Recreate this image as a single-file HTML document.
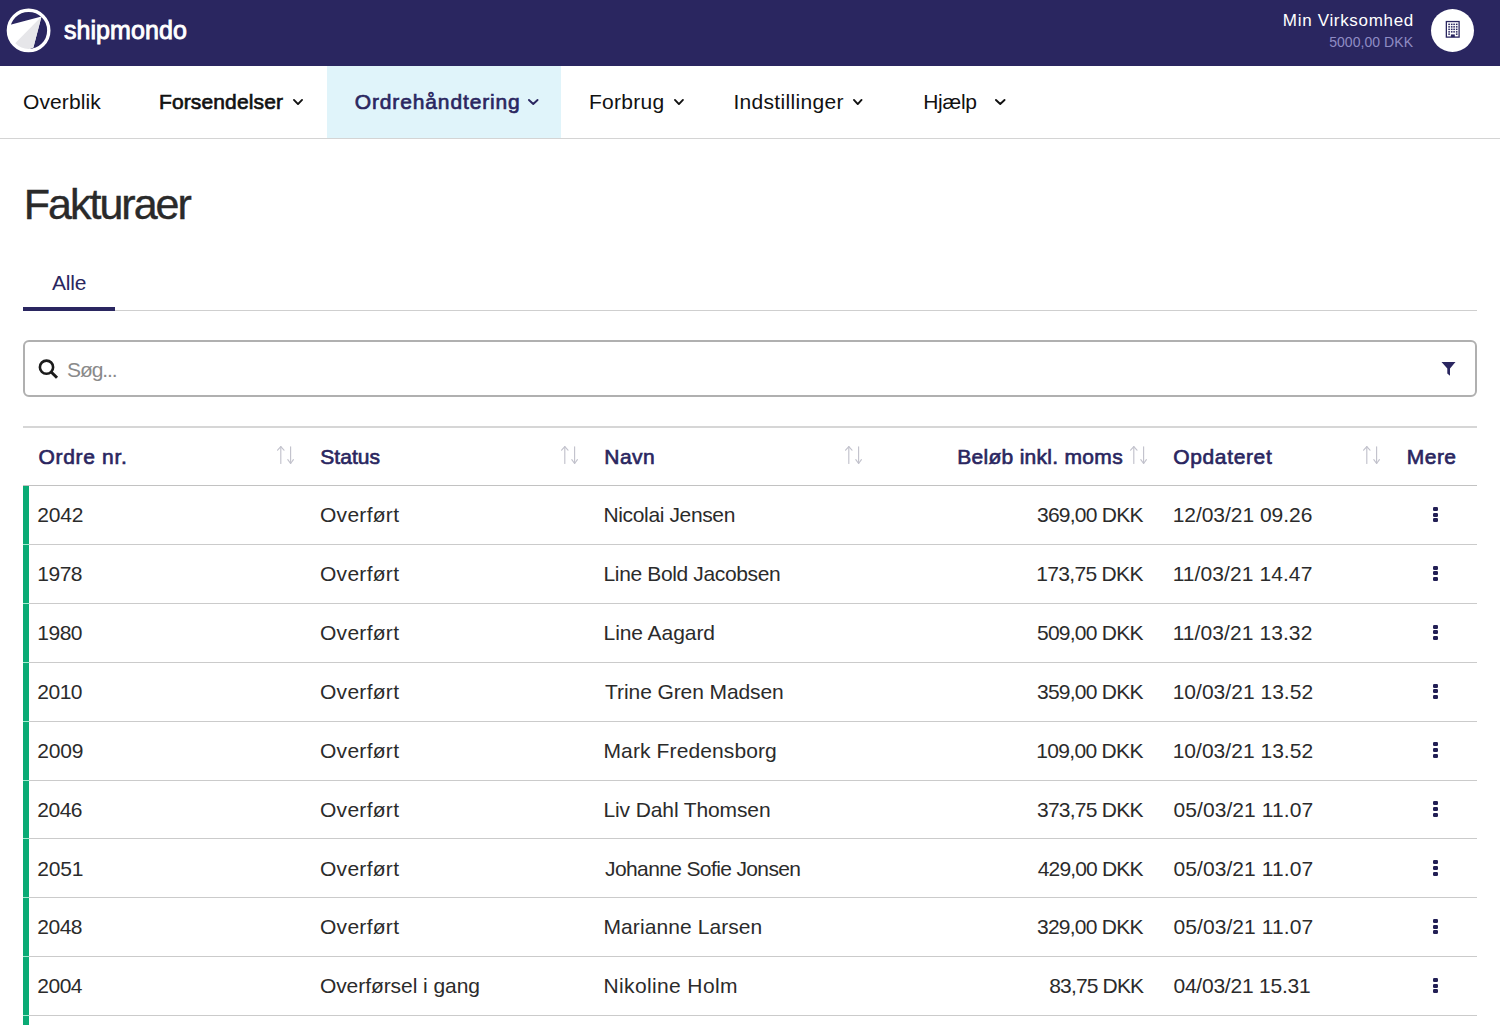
<!DOCTYPE html>
<html><head><meta charset="utf-8">
<style>
html,body{margin:0;padding:0;width:1500px;height:1025px;overflow:hidden;background:#ffffff;}
body{position:relative;font-family:"Liberation Sans",sans-serif;}
.t{position:absolute;white-space:nowrap;}
.r{position:absolute;}
</style></head><body>
<div class="r" style="left:0px;top:0px;width:1500px;height:66px;background:#2a2660;"></div>
<svg class="r" style="left:0;top:0" width="60" height="66" viewBox="0 0 60 66">
<defs><clipPath id="lc"><circle cx="28.6" cy="30.4" r="19.6"/></clipPath></defs>
<g clip-path="url(#lc)">
<polygon points="11.3,24.6 41.5,16.5 33.4,47.5 0,60 0,24" fill="#ffffff"/>
<polygon points="41.5,16.5 33.4,47.5 10,55 14.7,43.7" fill="#e6e6e9"/>
</g>
<circle cx="28.6" cy="30.4" r="20.2" fill="none" stroke="#ffffff" stroke-width="3.4"/>
</svg>
<div class="t" style="left:63.90px;top:17.84px;font-size:25px;line-height:25px;color:#ffffff;letter-spacing:0.087px;-webkit-text-stroke:0.9px #ffffff;">shipmondo</div>
<div class="t" style="left:1282.86px;top:12.31px;font-size:17px;line-height:17px;color:#ffffff;letter-spacing:0.678px;">Min Virksomhed</div>
<div class="t" style="left:1329.20px;top:34.95px;font-size:14px;line-height:14px;color:#8f8cc4;letter-spacing:0.051px;">5000,00 DKK</div>
<div class="r" style="left:1431px;top:8.7px;width:43px;height:43px;border-radius:50%;background:#fff"></div>
<svg class="r" style="left:1444px;top:19px" width="18" height="21" viewBox="0 0 18 21"><rect x="2.35" y="2.55" width="12.75" height="15.55" fill="none" stroke="#2a2660" stroke-width="1.3"/><g fill="#2a2660"><rect x="4.3" y="4.6" width="1.6" height="1.5"/><rect x="6.9" y="4.6" width="1.6" height="1.5"/><rect x="9.3" y="4.6" width="1.6" height="1.5"/><rect x="11.9" y="4.6" width="1.6" height="1.5"/><rect x="4.3" y="7.1" width="1.6" height="1.5"/><rect x="6.9" y="7.1" width="1.6" height="1.5"/><rect x="9.3" y="7.1" width="1.6" height="1.5"/><rect x="11.9" y="7.1" width="1.6" height="1.5"/><rect x="4.3" y="9.6" width="1.6" height="1.5"/><rect x="6.9" y="9.6" width="1.6" height="1.5"/><rect x="9.3" y="9.6" width="1.6" height="1.5"/><rect x="11.9" y="9.6" width="1.6" height="1.5"/><rect x="4.3" y="12.1" width="1.6" height="1.5"/><rect x="6.9" y="12.1" width="1.6" height="1.5"/><rect x="9.3" y="12.1" width="1.6" height="1.5"/><rect x="11.9" y="12.1" width="1.6" height="1.5"/><rect x="4.3" y="14.4" width="1.6" height="1.5"/><rect x="11.9" y="14.4" width="1.6" height="1.5"/><rect x="6.9" y="15.4" width="3.9" height="2.7"/></g></svg>
<div class="r" style="left:326.5px;top:66px;width:234.5px;height:72px;background:#e0f4fa;"></div>
<div class="r" style="left:0px;top:138px;width:1500px;height:1px;background:#d4d4d4;"></div>
<div class="t" style="left:22.98px;top:91.22px;font-size:21px;line-height:21px;color:#111111;letter-spacing:0.104px;">Overblik</div>
<div class="t" style="left:158.98px;top:91.22px;font-size:21px;line-height:21px;color:#111111;letter-spacing:0.131px;-webkit-text-stroke:0.65px #111111;">Forsendelser</div>
<svg class="r" style="left:293px;top:99.3px" width="10" height="6.0" viewBox="0 0 10 6.0" overflow="visible"><polyline points="0.95,0.95 5.0,5.05 9.05,0.95" fill="none" stroke="#111111" stroke-width="1.9" stroke-linecap="round" stroke-linejoin="round"/></svg>
<div class="t" style="left:354.78px;top:91.22px;font-size:21px;line-height:21px;color:#2a2660;letter-spacing:0.864px;-webkit-text-stroke:0.65px #2a2660;">Ordrehåndtering</div>
<svg class="r" style="left:527.5px;top:99.3px" width="10.5" height="6.0" viewBox="0 0 10.5 6.0" overflow="visible"><polyline points="0.95,0.95 5.25,5.05 9.55,0.95" fill="none" stroke="#2a2660" stroke-width="1.9" stroke-linecap="round" stroke-linejoin="round"/></svg>
<div class="t" style="left:588.96px;top:91.22px;font-size:21px;line-height:21px;color:#111111;letter-spacing:0.290px;">Forbrug</div>
<svg class="r" style="left:673.5px;top:99.3px" width="9.899999999999977" height="6.0" viewBox="0 0 9.899999999999977 6.0" overflow="visible"><polyline points="0.95,0.95 4.949999999999989,5.05 8.949999999999978,0.95" fill="none" stroke="#111111" stroke-width="1.9" stroke-linecap="round" stroke-linejoin="round"/></svg>
<div class="t" style="left:733.40px;top:91.22px;font-size:21px;line-height:21px;color:#111111;letter-spacing:0.319px;">Indstillinger</div>
<svg class="r" style="left:853px;top:99.3px" width="9.5" height="6.0" viewBox="0 0 9.5 6.0" overflow="visible"><polyline points="0.95,0.95 4.75,5.05 8.55,0.95" fill="none" stroke="#111111" stroke-width="1.9" stroke-linecap="round" stroke-linejoin="round"/></svg>
<div class="t" style="left:923.20px;top:91.22px;font-size:21px;line-height:21px;color:#111111;letter-spacing:-0.263px;">Hjælp</div>
<svg class="r" style="left:994.5px;top:99.3px" width="10.5" height="6.0" viewBox="0 0 10.5 6.0" overflow="visible"><polyline points="0.95,0.95 5.25,5.05 9.55,0.95" fill="none" stroke="#111111" stroke-width="1.9" stroke-linecap="round" stroke-linejoin="round"/></svg>
<div class="t" style="left:23.81px;top:183.20px;font-size:43px;line-height:43px;color:#2a2a2a;letter-spacing:-2.003px;-webkit-text-stroke:0.4px #2a2a2a;">Fakturaer</div>
<div class="t" style="left:52.12px;top:272.02px;font-size:21px;line-height:21px;color:#2a2660;letter-spacing:-0.263px;">Alle</div>
<div class="r" style="left:23px;top:310px;width:1454px;height:1px;background:#cfcfcf;"></div>
<div class="r" style="left:23px;top:307px;width:92px;height:4px;background:#2a2660;"></div>
<div class="r" style="left:23px;top:340px;width:1450px;height:53px;border:2px solid #b0b0b0;border-radius:6px;"></div>
<svg class="r" style="left:37px;top:358px" width="23" height="23" viewBox="0 0 23 23">
<circle cx="9.5" cy="9.2" r="6.6" fill="none" stroke="#1b1b1b" stroke-width="2.6"/>
<line x1="14.2" y1="14" x2="20" y2="19.8" stroke="#1b1b1b" stroke-width="3"/></svg>
<div class="t" style="left:67.08px;top:359.42px;font-size:21px;line-height:21px;color:#8a8a8a;letter-spacing:-1.121px;">Søg...</div>
<svg class="r" style="left:1440px;top:361px" width="17" height="16" viewBox="0 0 17 16">
<polygon points="1.5,1 15.5,1 10,7.5 10,14.7 7.3,12.5 7.3,7.5" fill="#2a2660"/></svg>
<div class="r" style="left:23px;top:426px;width:1454px;height:2px;background:#d6d6d6;"></div>
<div class="r" style="left:23px;top:485px;width:1454px;height:1px;background:#c2c2c2;"></div>
<div class="t" style="left:38.56px;top:445.82px;font-size:21px;line-height:21px;color:#2a2660;letter-spacing:0.672px;-webkit-text-stroke:0.65px #2a2660;">Ordre nr.</div>
<div class="t" style="left:320.32px;top:445.82px;font-size:21px;line-height:21px;color:#2a2660;letter-spacing:0.029px;-webkit-text-stroke:0.65px #2a2660;">Status</div>
<div class="t" style="left:604.20px;top:445.82px;font-size:21px;line-height:21px;color:#2a2660;letter-spacing:0.529px;-webkit-text-stroke:0.65px #2a2660;">Navn</div>
<div class="t" style="left:957.20px;top:445.82px;font-size:21px;line-height:21px;color:#2a2660;letter-spacing:0.294px;-webkit-text-stroke:0.65px #2a2660;">Beløb inkl. moms</div>
<div class="t" style="left:1173.22px;top:445.82px;font-size:21px;line-height:21px;color:#2a2660;letter-spacing:0.644px;-webkit-text-stroke:0.65px #2a2660;">Opdateret</div>
<div class="t" style="left:1406.86px;top:445.82px;font-size:21px;line-height:21px;color:#2a2660;letter-spacing:0.434px;-webkit-text-stroke:0.65px #2a2660;">Mere</div>
<svg class="r" style="left:277px;top:445px" width="19" height="20" viewBox="0 0 19 20" overflow="visible">
<g stroke="#c2c2cc" stroke-width="1.15" fill="none" stroke-linecap="round" stroke-linejoin="round">
<line x1="3.8" y1="1.6" x2="3.8" y2="18.5"/><polyline points="0.6,5.2 3.8,1.6 7,5.2"/>
<line x1="13.6" y1="1.8" x2="13.6" y2="18.5"/><polyline points="10.8,14.6 13.6,18.5 16.4,14.6"/>
</g></svg>
<svg class="r" style="left:561px;top:445px" width="19" height="20" viewBox="0 0 19 20" overflow="visible">
<g stroke="#c2c2cc" stroke-width="1.15" fill="none" stroke-linecap="round" stroke-linejoin="round">
<line x1="3.8" y1="1.6" x2="3.8" y2="18.5"/><polyline points="0.6,5.2 3.8,1.6 7,5.2"/>
<line x1="13.6" y1="1.8" x2="13.6" y2="18.5"/><polyline points="10.8,14.6 13.6,18.5 16.4,14.6"/>
</g></svg>
<svg class="r" style="left:845px;top:445px" width="19" height="20" viewBox="0 0 19 20" overflow="visible">
<g stroke="#c2c2cc" stroke-width="1.15" fill="none" stroke-linecap="round" stroke-linejoin="round">
<line x1="3.8" y1="1.6" x2="3.8" y2="18.5"/><polyline points="0.6,5.2 3.8,1.6 7,5.2"/>
<line x1="13.6" y1="1.8" x2="13.6" y2="18.5"/><polyline points="10.8,14.6 13.6,18.5 16.4,14.6"/>
</g></svg>
<svg class="r" style="left:1129.6px;top:445px" width="19" height="20" viewBox="0 0 19 20" overflow="visible">
<g stroke="#c2c2cc" stroke-width="1.15" fill="none" stroke-linecap="round" stroke-linejoin="round">
<line x1="3.8" y1="1.6" x2="3.8" y2="18.5"/><polyline points="0.6,5.2 3.8,1.6 7,5.2"/>
<line x1="13.6" y1="1.8" x2="13.6" y2="18.5"/><polyline points="10.8,14.6 13.6,18.5 16.4,14.6"/>
</g></svg>
<svg class="r" style="left:1363.4px;top:445px" width="19" height="20" viewBox="0 0 19 20" overflow="visible">
<g stroke="#c2c2cc" stroke-width="1.15" fill="none" stroke-linecap="round" stroke-linejoin="round">
<line x1="3.8" y1="1.6" x2="3.8" y2="18.5"/><polyline points="0.6,5.2 3.8,1.6 7,5.2"/>
<line x1="13.6" y1="1.8" x2="13.6" y2="18.5"/><polyline points="10.8,14.6 13.6,18.5 16.4,14.6"/>
</g></svg>
<div class="r" style="left:23px;top:486px;width:6px;height:58px;background:#0aab75;"></div>
<div class="r" style="left:29px;top:544px;width:1448px;height:1px;background:#cbcbcb;"></div>
<div class="r" style="left:23px;top:544px;width:6px;height:1px;background:#a5ecd0;"></div>
<div class="r" style="left:23px;top:545px;width:6px;height:58px;background:#0aab75;"></div>
<div class="r" style="left:29px;top:603px;width:1448px;height:1px;background:#cbcbcb;"></div>
<div class="r" style="left:23px;top:603px;width:6px;height:1px;background:#a5ecd0;"></div>
<div class="r" style="left:23px;top:604px;width:6px;height:58px;background:#0aab75;"></div>
<div class="r" style="left:29px;top:662px;width:1448px;height:1px;background:#cbcbcb;"></div>
<div class="r" style="left:23px;top:662px;width:6px;height:1px;background:#a5ecd0;"></div>
<div class="r" style="left:23px;top:663px;width:6px;height:58px;background:#0aab75;"></div>
<div class="r" style="left:29px;top:721px;width:1448px;height:1px;background:#cbcbcb;"></div>
<div class="r" style="left:23px;top:721px;width:6px;height:1px;background:#a5ecd0;"></div>
<div class="r" style="left:23px;top:722px;width:6px;height:58px;background:#0aab75;"></div>
<div class="r" style="left:29px;top:780px;width:1448px;height:1px;background:#cbcbcb;"></div>
<div class="r" style="left:23px;top:780px;width:6px;height:1px;background:#a5ecd0;"></div>
<div class="r" style="left:23px;top:781px;width:6px;height:57px;background:#0aab75;"></div>
<div class="r" style="left:29px;top:838px;width:1448px;height:1px;background:#cbcbcb;"></div>
<div class="r" style="left:23px;top:838px;width:6px;height:1px;background:#a5ecd0;"></div>
<div class="r" style="left:23px;top:839px;width:6px;height:58px;background:#0aab75;"></div>
<div class="r" style="left:29px;top:897px;width:1448px;height:1px;background:#cbcbcb;"></div>
<div class="r" style="left:23px;top:897px;width:6px;height:1px;background:#a5ecd0;"></div>
<div class="r" style="left:23px;top:898px;width:6px;height:58px;background:#0aab75;"></div>
<div class="r" style="left:29px;top:956px;width:1448px;height:1px;background:#cbcbcb;"></div>
<div class="r" style="left:23px;top:956px;width:6px;height:1px;background:#a5ecd0;"></div>
<div class="r" style="left:23px;top:957px;width:6px;height:58px;background:#0aab75;"></div>
<div class="r" style="left:29px;top:1015px;width:1448px;height:1px;background:#cbcbcb;"></div>
<div class="r" style="left:23px;top:1015px;width:6px;height:1px;background:#a5ecd0;"></div>
<div class="r" style="left:23px;top:1016px;width:6px;height:9px;background:#0aab75;"></div>
<div class="t" style="left:37.20px;top:504.32px;font-size:21px;line-height:21px;color:#2b2b2b;letter-spacing:-0.188px;">2042</div>
<div class="t" style="left:319.98px;top:504.32px;font-size:21px;line-height:21px;color:#2b2b2b;letter-spacing:0.288px;">Overført</div>
<div class="t" style="left:603.52px;top:504.32px;font-size:21px;line-height:21px;color:#2b2b2b;letter-spacing:-0.363px;">Nicolai Jensen</div>
<div class="t" style="left:1036.98px;top:504.32px;font-size:21px;line-height:21px;color:#2b2b2b;letter-spacing:-0.755px;">369,00 DKK</div>
<div class="t" style="left:1172.64px;top:504.32px;font-size:21px;line-height:21px;color:#2b2b2b;letter-spacing:-0.033px;">12/03/21 09.26</div>
<div class="r" style="left:1433px;top:506.90px;width:5px;height:4px;border-radius:1.2px;background:#221f55"></div>
<div class="r" style="left:1433px;top:512.60px;width:5px;height:4px;border-radius:1.2px;background:#221f55"></div>
<div class="r" style="left:1433px;top:518.30px;width:5px;height:4px;border-radius:1.2px;background:#221f55"></div>
<div class="t" style="left:37.20px;top:563.20px;font-size:21px;line-height:21px;color:#2b2b2b;letter-spacing:-0.455px;">1978</div>
<div class="t" style="left:319.98px;top:563.20px;font-size:21px;line-height:21px;color:#2b2b2b;letter-spacing:0.288px;">Overført</div>
<div class="t" style="left:603.52px;top:563.20px;font-size:21px;line-height:21px;color:#2b2b2b;letter-spacing:-0.361px;">Line Bold Jacobsen</div>
<div class="t" style="left:1036.18px;top:563.20px;font-size:21px;line-height:21px;color:#2b2b2b;letter-spacing:-0.666px;">173,75 DKK</div>
<div class="t" style="left:1172.64px;top:563.20px;font-size:21px;line-height:21px;color:#2b2b2b;letter-spacing:0.086px;">11/03/21 14.47</div>
<div class="r" style="left:1433px;top:565.77px;width:5px;height:4px;border-radius:1.2px;background:#221f55"></div>
<div class="r" style="left:1433px;top:571.48px;width:5px;height:4px;border-radius:1.2px;background:#221f55"></div>
<div class="r" style="left:1433px;top:577.17px;width:5px;height:4px;border-radius:1.2px;background:#221f55"></div>
<div class="t" style="left:37.20px;top:622.07px;font-size:21px;line-height:21px;color:#2b2b2b;letter-spacing:-0.455px;">1980</div>
<div class="t" style="left:319.98px;top:622.07px;font-size:21px;line-height:21px;color:#2b2b2b;letter-spacing:0.288px;">Overført</div>
<div class="t" style="left:603.52px;top:622.07px;font-size:21px;line-height:21px;color:#2b2b2b;letter-spacing:-0.060px;">Line Aagard</div>
<div class="t" style="left:1036.98px;top:622.07px;font-size:21px;line-height:21px;color:#2b2b2b;letter-spacing:-0.755px;">509,00 DKK</div>
<div class="t" style="left:1172.64px;top:622.07px;font-size:21px;line-height:21px;color:#2b2b2b;letter-spacing:0.086px;">11/03/21 13.32</div>
<div class="r" style="left:1433px;top:624.65px;width:5px;height:4px;border-radius:1.2px;background:#221f55"></div>
<div class="r" style="left:1433px;top:630.35px;width:5px;height:4px;border-radius:1.2px;background:#221f55"></div>
<div class="r" style="left:1433px;top:636.05px;width:5px;height:4px;border-radius:1.2px;background:#221f55"></div>
<div class="t" style="left:37.20px;top:680.95px;font-size:21px;line-height:21px;color:#2b2b2b;letter-spacing:-0.455px;">2010</div>
<div class="t" style="left:319.98px;top:680.95px;font-size:21px;line-height:21px;color:#2b2b2b;letter-spacing:0.288px;">Overført</div>
<div class="t" style="left:605.12px;top:680.95px;font-size:21px;line-height:21px;color:#2b2b2b;letter-spacing:-0.091px;">Trine Gren Madsen</div>
<div class="t" style="left:1036.98px;top:680.95px;font-size:21px;line-height:21px;color:#2b2b2b;letter-spacing:-0.755px;">359,00 DKK</div>
<div class="t" style="left:1172.64px;top:680.95px;font-size:21px;line-height:21px;color:#2b2b2b;letter-spacing:0.028px;">10/03/21 13.52</div>
<div class="r" style="left:1433px;top:683.52px;width:5px;height:4px;border-radius:1.2px;background:#221f55"></div>
<div class="r" style="left:1433px;top:689.23px;width:5px;height:4px;border-radius:1.2px;background:#221f55"></div>
<div class="r" style="left:1433px;top:694.92px;width:5px;height:4px;border-radius:1.2px;background:#221f55"></div>
<div class="t" style="left:37.20px;top:739.82px;font-size:21px;line-height:21px;color:#2b2b2b;letter-spacing:-0.188px;">2009</div>
<div class="t" style="left:319.98px;top:739.82px;font-size:21px;line-height:21px;color:#2b2b2b;letter-spacing:0.288px;">Overført</div>
<div class="t" style="left:603.52px;top:739.82px;font-size:21px;line-height:21px;color:#2b2b2b;letter-spacing:0.114px;">Mark Fredensborg</div>
<div class="t" style="left:1036.18px;top:739.82px;font-size:21px;line-height:21px;color:#2b2b2b;letter-spacing:-0.666px;">109,00 DKK</div>
<div class="t" style="left:1172.64px;top:739.82px;font-size:21px;line-height:21px;color:#2b2b2b;letter-spacing:0.028px;">10/03/21 13.52</div>
<div class="r" style="left:1433px;top:742.40px;width:5px;height:4px;border-radius:1.2px;background:#221f55"></div>
<div class="r" style="left:1433px;top:748.10px;width:5px;height:4px;border-radius:1.2px;background:#221f55"></div>
<div class="r" style="left:1433px;top:753.80px;width:5px;height:4px;border-radius:1.2px;background:#221f55"></div>
<div class="t" style="left:37.20px;top:798.70px;font-size:21px;line-height:21px;color:#2b2b2b;letter-spacing:-0.455px;">2046</div>
<div class="t" style="left:319.98px;top:798.70px;font-size:21px;line-height:21px;color:#2b2b2b;letter-spacing:0.288px;">Overført</div>
<div class="t" style="left:603.52px;top:798.70px;font-size:21px;line-height:21px;color:#2b2b2b;letter-spacing:-0.120px;">Liv Dahl Thomsen</div>
<div class="t" style="left:1036.98px;top:798.70px;font-size:21px;line-height:21px;color:#2b2b2b;letter-spacing:-0.755px;">373,75 DKK</div>
<div class="t" style="left:1173.44px;top:798.70px;font-size:21px;line-height:21px;color:#2b2b2b;letter-spacing:0.086px;">05/03/21 11.07</div>
<div class="r" style="left:1433px;top:801.27px;width:5px;height:4px;border-radius:1.2px;background:#221f55"></div>
<div class="r" style="left:1433px;top:806.98px;width:5px;height:4px;border-radius:1.2px;background:#221f55"></div>
<div class="r" style="left:1433px;top:812.67px;width:5px;height:4px;border-radius:1.2px;background:#221f55"></div>
<div class="t" style="left:37.20px;top:857.57px;font-size:21px;line-height:21px;color:#2b2b2b;letter-spacing:-0.188px;">2051</div>
<div class="t" style="left:319.98px;top:857.57px;font-size:21px;line-height:21px;color:#2b2b2b;letter-spacing:0.288px;">Overført</div>
<div class="t" style="left:605.12px;top:857.57px;font-size:21px;line-height:21px;color:#2b2b2b;letter-spacing:-0.628px;">Johanne Sofie Jonsen</div>
<div class="t" style="left:1037.78px;top:857.57px;font-size:21px;line-height:21px;color:#2b2b2b;letter-spacing:-0.844px;">429,00 DKK</div>
<div class="t" style="left:1173.44px;top:857.57px;font-size:21px;line-height:21px;color:#2b2b2b;letter-spacing:0.086px;">05/03/21 11.07</div>
<div class="r" style="left:1433px;top:860.15px;width:5px;height:4px;border-radius:1.2px;background:#221f55"></div>
<div class="r" style="left:1433px;top:865.85px;width:5px;height:4px;border-radius:1.2px;background:#221f55"></div>
<div class="r" style="left:1433px;top:871.55px;width:5px;height:4px;border-radius:1.2px;background:#221f55"></div>
<div class="t" style="left:37.20px;top:916.45px;font-size:21px;line-height:21px;color:#2b2b2b;letter-spacing:-0.455px;">2048</div>
<div class="t" style="left:319.98px;top:916.45px;font-size:21px;line-height:21px;color:#2b2b2b;letter-spacing:0.288px;">Overført</div>
<div class="t" style="left:603.52px;top:916.45px;font-size:21px;line-height:21px;color:#2b2b2b;letter-spacing:0.081px;">Marianne Larsen</div>
<div class="t" style="left:1036.98px;top:916.45px;font-size:21px;line-height:21px;color:#2b2b2b;letter-spacing:-0.755px;">329,00 DKK</div>
<div class="t" style="left:1173.44px;top:916.45px;font-size:21px;line-height:21px;color:#2b2b2b;letter-spacing:0.086px;">05/03/21 11.07</div>
<div class="r" style="left:1433px;top:919.02px;width:5px;height:4px;border-radius:1.2px;background:#221f55"></div>
<div class="r" style="left:1433px;top:924.73px;width:5px;height:4px;border-radius:1.2px;background:#221f55"></div>
<div class="r" style="left:1433px;top:930.42px;width:5px;height:4px;border-radius:1.2px;background:#221f55"></div>
<div class="t" style="left:37.20px;top:975.32px;font-size:21px;line-height:21px;color:#2b2b2b;letter-spacing:-0.455px;">2004</div>
<div class="t" style="left:319.88px;top:975.32px;font-size:21px;line-height:21px;color:#2b2b2b;letter-spacing:-0.063px;">Overførsel i gang</div>
<div class="t" style="left:603.52px;top:975.32px;font-size:21px;line-height:21px;color:#2b2b2b;letter-spacing:0.368px;">Nikoline Holm</div>
<div class="t" style="left:1049.22px;top:975.32px;font-size:21px;line-height:21px;color:#2b2b2b;letter-spacing:-0.832px;">83,75 DKK</div>
<div class="t" style="left:1173.44px;top:975.32px;font-size:21px;line-height:21px;color:#2b2b2b;letter-spacing:-0.223px;">04/03/21 15.31</div>
<div class="r" style="left:1433px;top:977.90px;width:5px;height:4px;border-radius:1.2px;background:#221f55"></div>
<div class="r" style="left:1433px;top:983.60px;width:5px;height:4px;border-radius:1.2px;background:#221f55"></div>
<div class="r" style="left:1433px;top:989.30px;width:5px;height:4px;border-radius:1.2px;background:#221f55"></div>
</body></html>
